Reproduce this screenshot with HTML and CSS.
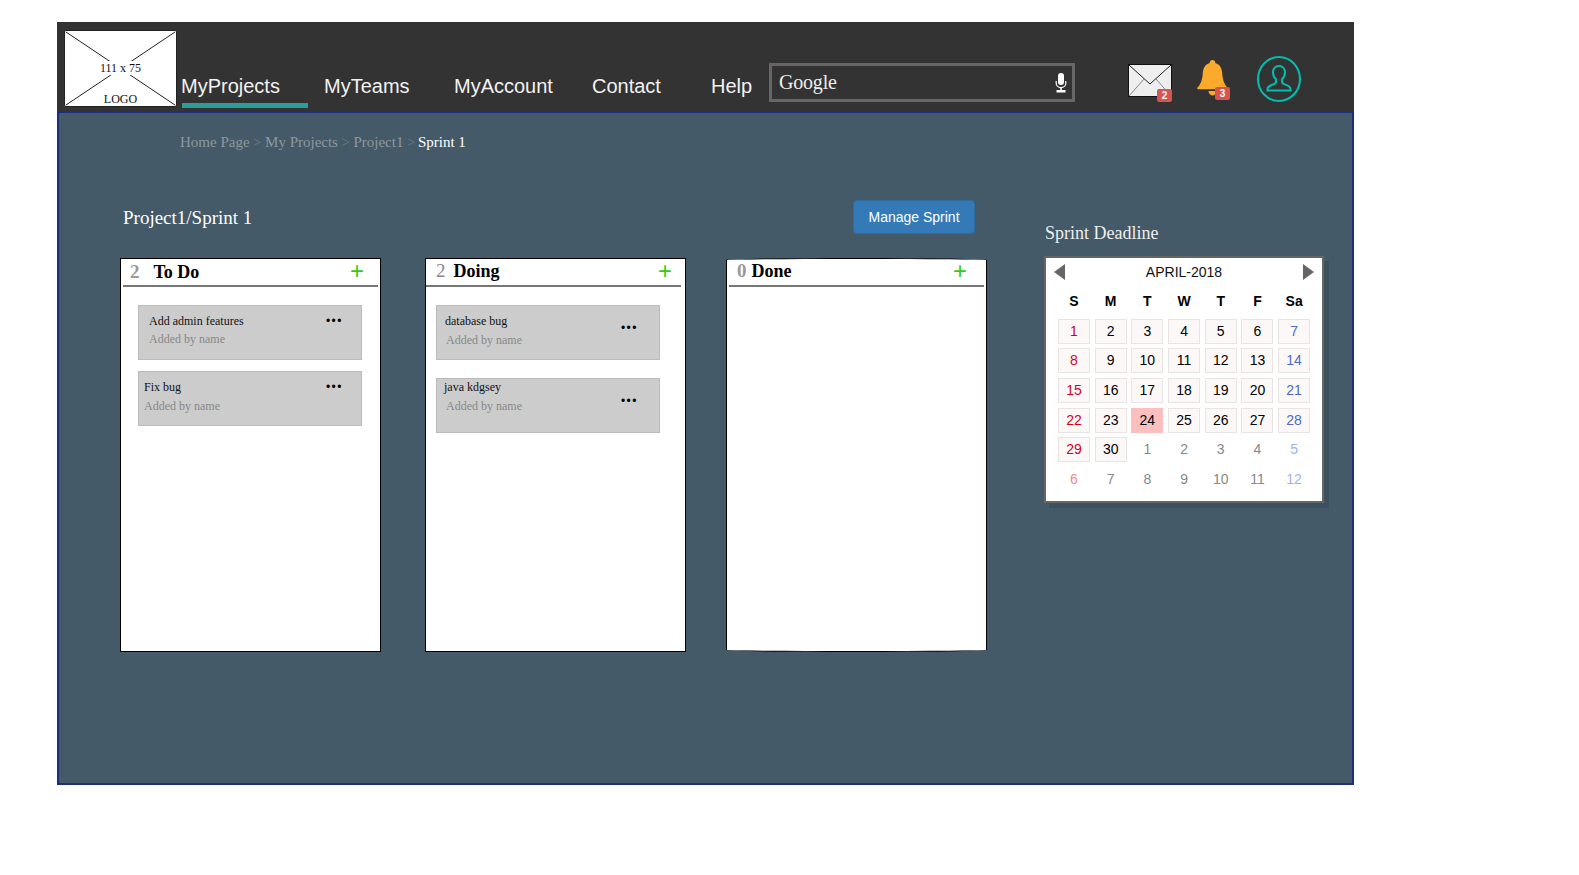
FILE: index.html
```html
<!DOCTYPE html>
<html lang="en">
<head>
  <meta charset="UTF-8" />
  <title>Sprint 1</title>
  <link rel="stylesheet" href="styles.css">
</head>
<body>
  <div class="frame">
    <header class="topbar">
      <div class="logo">
        <svg class="logo-cross" viewBox="0 0 111 75" preserveAspectRatio="none">
          <line x1="1" y1="1" x2="110" y2="74" />
          <line x1="110" y1="1" x2="1" y2="74" />
        </svg>
        <span class="logo-size">111 x 75</span>
        <span class="logo-name">LOGO</span>
      </div>
      <nav class="nav">
        <a class="nav-link active">MyProjects</a>
        <a class="nav-link">MyTeams</a>
        <a class="nav-link">MyAccount</a>
        <a class="nav-link">Contact</a>
        <a class="nav-link">Help</a>
      </nav>
      <div class="search">
        <span class="search-word">Google</span>
        <svg class="search-mic" viewBox="0 0 12 20" width="12" height="20">
          <rect x="3" y="0" width="6" height="12" rx="3" fill="#fff" />
          <path d="M1.2 8v2.2c0 2.6 2.1 4.4 4.8 4.4s4.800-1.800 4.800-4.400V8" fill="none" stroke="#fff" stroke-width="1.200" />
          <rect x="5.200" y="14" width="1.600" height="3" fill="#fff" />
          <rect x="1.500" y="17" width="9" height="2.500" fill="#fff" />
        </svg>
      </div>
      <div class="tools">
        <div class="tool tool-mail">
          <svg viewBox="0 0 44 33" width="44" height="33">
            <rect x="0.500" y="0.500" width="43" height="32" fill="#eee" stroke="#111" />
            <path d="M1 1l21 19L43 1" fill="none" stroke="#222" />
            <path d="M1 32l15-17M43 32L28 15" fill="none" stroke="#888" />
          </svg>
          <span class="badge badge-mail">2</span>
        </div>
        <div class="tool tool-bell">
          <svg viewBox="0 0 31 36" width="31" height="36">
            <path d="M15.500 0c1.800 0 2.800 1.300 2.800 3 4.700 1.500 6.600 5.300 6.900 10 .4 6.500 1.800 11 5.300 14.500.6.800.2 1.800-.9 1.800H1.400c-1.100 0-1.500-1-.9-1.800C4 24 5.400 19.500 5.800 13c.3-4.700 2.200-8.500 6.900-10 0-1.700 1-3 2.800-3z" fill="#fcaa2c" />
            <path d="M11.500 31h8c-.3 2.800-1.900 4.500-4 4.500s-3.700-1.700-4-4.500z" fill="#fcaa2c" />
          </svg>
          <span class="badge badge-bell">3</span>
        </div>
        <svg class="avatar" viewBox="0 0 44 46" width="44" height="46">
          <ellipse cx="22" cy="23" rx="21" ry="22" fill="none" stroke="#00bfae" stroke-width="2" />
          <path d="M22 10c-3.800 0-6 3-6 6.500 0 2.800 1.300 5.200 3 6.800v2.700c0 1.300-1.200 1.900-3.200 2.600-3 1-5.300 2-5.300 4.400v1.500h23v-1.500c0-2.400-2.300-3.400-5.300-4.400-2-.7-3.200-1.300-3.200-2.600v-2.700c1.700-1.600 3-4 3-6.800 0-3.500-2.200-6.500-6-6.500z" fill="none" stroke="#00bfae" stroke-width="2" />
        </svg>
      </div>
    </header>

    <main class="content">
      <div class="breadcrumb">
        <a>Home Page</a><i>&gt;</i><a>My Projects</a><i>&gt;</i><a>Project1</a><i>&gt;</i><b>Sprint 1</b>
      </div>

      <div class="workspace">
        <section class="sprint">
          <div class="sprint-head">
            <h1>Project1/Sprint 1</h1>
            <button class="btn-manage">Manage Sprint</button>
          </div>

          <div class="board">
            <div class="col col-todo">
              <div class="col-head">
                <span class="col-count">2</span>
                <span class="col-name">To Do</span>
                <span class="col-add">+</span>
              </div>
              <div class="card">
                <div class="card-text">
                  <p class="card-title">Add admin features</p>
                  <p class="card-by">Added by name</p>
                </div>
                <span class="card-menu">•••</span>
              </div>
              <div class="card card-tight">
                <div class="card-text">
                  <p class="card-title">Fix bug</p>
                  <p class="card-by">Added by name</p>
                </div>
                <span class="card-menu">•••</span>
              </div>
            </div>

            <div class="col col-doing">
              <div class="col-head">
                <span class="col-count">2</span>
                <span class="col-name">Doing</span>
                <span class="col-add">+</span>
              </div>
              <div class="card">
                <div class="card-text">
                  <p class="card-title">database bug</p>
                  <p class="card-by">Added by name</p>
                </div>
                <span class="card-menu">•••</span>
              </div>
              <div class="card">
                <div class="card-text">
                  <p class="card-title">java kdgsey</p>
                  <p class="card-by">Added by name</p>
                </div>
                <span class="card-menu">•••</span>
              </div>
            </div>

            <div class="col col-done">
              <div class="col-head">
                <span class="col-count">0</span>
                <span class="col-name">Done</span>
                <span class="col-add">+</span>
              </div>
            </div>
          </div>
        </section>

        <aside class="deadline">
          <h2>Sprint Deadline</h2>
          <div class="calendar">
            <div class="cal-head">
              <span class="cal-prev"></span>
              <span class="cal-month">APRIL-2018</span>
              <span class="cal-next"></span>
            </div>
            <div class="cal-grid" id="cal-grid"></div>
          </div>
        </aside>
      </div>
    </main>
  </div>

  <script>
    const calGrid = document.getElementById('cal-grid');
    const weekdays = ['S', 'M', 'T', 'W', 'T', 'F', 'Sa'];

    weekdays.forEach(name => {
      const head = document.createElement('div');
      head.className = 'cal-weekday';
      head.textContent = name;
      calGrid.appendChild(head);
    });

    const days = [];
    for (let i = 1; i <= 30; i++) days.push({ n: i, inMonth: true });
    for (let i = 1; i <= 12; i++) days.push({ n: i, inMonth: false });

    days.forEach((day, index) => {
      const cell = document.createElement('div');
      let name = 'cal-day';
      if (day.inMonth) name += ' in-month';
      if (index % 7 === 0) name += ' sun';
      if (index % 7 === 6) name += ' sat';
      if (day.inMonth && day.n === 24) name += ' today';
      cell.className = name;
      cell.textContent = day.n;
      calGrid.appendChild(cell);
    });
  </script>
</body>
</html>
```

FILE: styles.css
```css
* {
  margin: 0;
  padding: 0;
  box-sizing: border-box;
}

body {
  background: #fff;
  font-family: 'Liberation Sans', Arial, sans-serif;
  overflow: hidden;
}

.frame {
  width: 1297px;
  margin: 22px 0 0 57px;
}

/* top bar */
.topbar {
  display: flex;
  height: 89px;
  background: #333;
  padding: 8px 0 0 7px;
}

.logo {
  position: relative;
  width: 113px;
  height: 77px;
  background: #fff;
  border: 1px solid #222;
  border-radius: 2px;
  color: #111;
  font-family: 'Liberation Serif', serif;
  font-size: 12px;
  flex-shrink: 0;
}

.logo-cross {
  position: absolute;
  inset: 0;
  width: 100%;
  height: 100%;
}

.logo-cross line {
  stroke: #222;
  stroke-width: 1;
}

.logo-size,
.logo-name {
  position: absolute;
  left: 0;
  right: 0;
  text-align: center;
  background: #fff;
  line-height: 14px;
}

.logo-size {
  top: 30px;
  left: 29px;
  right: 29px;
}

.logo-name {
  bottom: 0;
  left: 31px;
  right: 31px;
}

.nav {
  display: grid;
  grid-template-columns: 143px 130px 138px 119px 58px;
  margin-left: 4px;
  height: 78px;
  align-items: end;
  flex-shrink: 0;
}

.nav-link {
  display: block;
  color: #f2f2f2;
  font-size: 20px;
  line-height: 23px;
  padding-bottom: 10px;
}

.nav-link.active {
  position: relative;
}

.nav-link.active::after {
  content: '';
  position: absolute;
  left: 1px;
  bottom: 0;
  width: 126px;
  height: 5px;
  background: #2a9d9a;
}

.search {
  display: flex;
  align-items: center;
  justify-content: space-between;
  width: 306px;
  height: 39px;
  margin: 33px 0 0;
  padding: 0 5px 0 7px;
  border: 3px solid #666;
  color: #eee;
  flex-shrink: 0;
}

.search-word {
  font-family: 'Liberation Serif', serif;
  font-size: 20px;
  letter-spacing: -0.2px;
}

.tools {
  position: relative;
  flex: 1;
}

.tool,
.avatar {
  position: absolute;
}

.tool svg {
  display: block;
}

.tool-mail {
  left: 53px;
  top: 34px;
}

.tool-bell {
  left: 122px;
  top: 30px;
}

.avatar {
  left: 182px;
  top: 26px;
}

.badge {
  position: absolute;
  width: 15px;
  height: 13px;
  background: #d9534f;
  border-radius: 2px;
  color: #fff;
  font-size: 10px;
  font-weight: bold;
  line-height: 13px;
  text-align: center;
}

.badge-mail {
  left: 29px;
  top: 25px;
}

.badge-bell {
  left: 18px;
  top: 27px;
}

/* main area */
.content {
  height: 674px;
  background: #445a68;
  border: 2px solid #1b2f80;
  padding-top: 19px;
}

.breadcrumb {
  height: 20px;
  padding-left: 121px;
  color: #8f979d;
  font-family: 'Liberation Serif', serif;
  font-size: 15px;
  line-height: 20px;
}

.breadcrumb i {
  margin: 0 3.5px;
  font-style: normal;
  color: #6d7c87;
}

.breadcrumb b {
  font-weight: normal;
  color: #fff;
  margin-left: -1px;
}

.workspace {
  display: grid;
  grid-template-columns: 867px 281px;
  column-gap: 57px;
  margin: 49px 0 0 61px;
}

.sprint-head {
  display: flex;
  align-items: center;
  justify-content: space-between;
  height: 32px;
  margin-bottom: 25px;
  padding: 0 12px 0 3px;
}

.sprint-head h1 {
  margin-top: 2px;
  color: #fff;
  font-family: 'Liberation Serif', serif;
  font-size: 19px;
  font-weight: normal;
}

.btn-manage {
  width: 122px;
  height: 34px;
  margin-top: -1px;
  background: #337ab7;
  border: 1px solid #2e6da4;
  border-radius: 4px;
  color: #fff;
  font-family: 'Liberation Sans', Arial, sans-serif;
  font-size: 14px;
}

/* board */
.board {
  display: grid;
  grid-template-columns: 305px 301px 261px;
}

.col {
  width: 261px;
  height: 394px;
  background: #fff;
  border: 1px solid #000;
  font-family: 'Liberation Serif', serif;
}

.col-done {
  border-radius: 130px / 2px;
}

.col-head {
  display: flex;
  align-items: center;
  height: 28px;
  margin: 0 2px 18px;
  padding-bottom: 1px;
  border-bottom: 2px solid #777;
}

.col-count {
  color: #888;
  font-size: 19px;
}

.col-todo .col-count,
.col-done .col-count {
  font-weight: bold;
  color: #999;
}

.col-name {
  color: #000;
  font-size: 18px;
  font-weight: bold;
}

.col-add {
  margin-left: auto;
  color: #33cc11;
  font-family: 'Liberation Sans', Arial, sans-serif;
  font-size: 24px;
  line-height: 22px;
}

.col-todo .col-head {
  padding: 0 14px 0 7px;
}

.col-todo .col-name {
  margin-left: 14px;
}

.col-todo .col-add {
  margin-bottom: 2px;
}

.col-doing .col-head {
  margin-left: 0;
  margin-right: 0;
  padding: 0 9px 2px 10px;
  width: 255px;
}

.col-doing .col-name {
  margin-left: 8px;
}

.col-done .col-head {
  padding: 0 17px 2px 8px;
}

.col-done .col-name {
  margin-left: 5px;
}

.card {
  display: flex;
  justify-content: space-between;
  height: 55px;
  background: #ccc;
  border: 1px solid #bbb;
  font-size: 12px;
}

.card-text {
  padding-top: 7px;
}

.card-title {
  color: #111;
  line-height: 16px;
}

.card-by {
  margin-top: 2px;
  color: #888;
  line-height: 16px;
}

.card-menu {
  color: #000;
  font-family: 'Liberation Sans', Arial, sans-serif;
  font-size: 12px;
  letter-spacing: 1.500px;
  line-height: 16px;
}

.col-todo .card {
  width: 224px;
  margin-left: 17px;
  padding: 0 18px 0 10px;
}

.col-todo .card-menu {
  margin-top: 7px;
}

.col-todo .card-tight {
  margin-top: 11px;
  padding-left: 5px;
}

.col-todo .card-tight .card-by {
  margin-top: 3px;
}

.col-doing .card {
  width: 224px;
  margin-left: 10px;
  padding: 0 21px 0 9px;
}

.col-doing .card + .card {
  margin-top: 18px;
}

.col-doing .card + .card .card-text {
  padding-top: 0;
}

.col-doing .card-title {
  margin-left: -1px;
}

.col-doing .card + .card .card-title {
  margin-left: -2px;
}

.col-doing .card-menu {
  margin-top: 14px;
}

.col-doing .card-by {
  margin-top: 3px;
}

/* calendar */
.deadline h2 {
  height: 22px;
  margin: 21px 0 12px 1px;
  color: #eee;
  font-family: 'Liberation Serif', serif;
  font-size: 18px;
  font-weight: normal;
  line-height: 22px;
}

.calendar {
  width: 280px;
  height: 247px;
  background: #fff;
  border: 2px solid #666;
  box-shadow: 5px 5px 0 #3c505e;
}

.cal-head {
  display: flex;
  align-items: center;
  justify-content: space-between;
  height: 28px;
  padding: 0 8px;
}

.cal-prev,
.cal-next {
  width: 0;
  height: 0;
  border-top: 8px solid transparent;
  border-bottom: 8px solid transparent;
}

.cal-prev {
  border-right: 11px solid #666;
}

.cal-next {
  border-left: 11px solid #666;
}

.cal-month {
  color: #111;
  font-size: 14px;
}

.cal-grid {
  display: grid;
  grid-template-columns: repeat(7, 32px);
  grid-auto-rows: 25px;
  column-gap: 4.700px;
  row-gap: 4.700px;
  margin: 3px 0 0 12px;
  font-size: 14px;
  text-align: center;
}

.cal-weekday {
  margin-bottom: -1px;
  color: #000;
  font-weight: bold;
  line-height: 25px;
}

.cal-day {
  color: #888;
  line-height: 24px;
}

.cal-day.sun {
  color: #ee8a8a;
}

.cal-day.sat {
  color: #a0b4e4;
}

.cal-day.in-month {
  background: #fdf8f8;
  border: 1px solid #e8e4e4;
  color: #000;
  line-height: 23px;
}

.cal-day.in-month.sun {
  color: #d0021b;
}

.cal-day.in-month.sat {
  color: #4a6cc0;
}

.cal-day.today {
  background: #fbbfbf;
  border-color: #fbbfbf;
}
```
